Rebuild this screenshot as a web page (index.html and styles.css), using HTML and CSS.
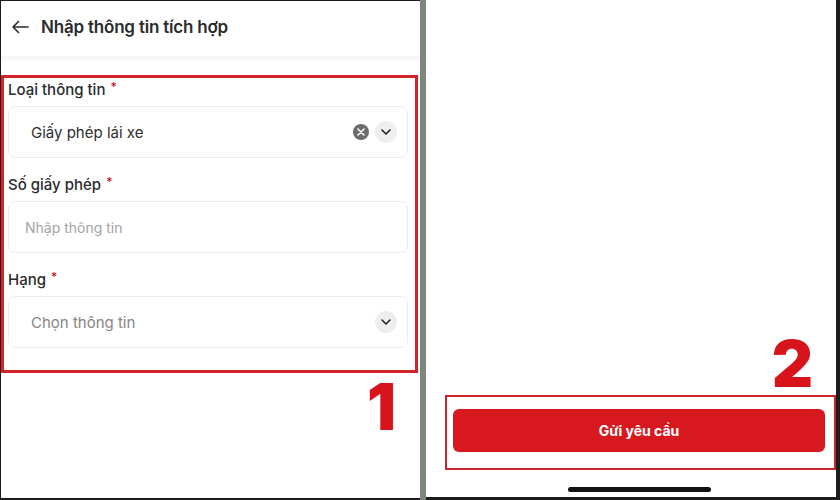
FILE: index.html
```html
<!DOCTYPE html>
<html lang="vi">
<head>
  <meta charset="UTF-8">
  <meta name="viewport" content="width=device-width, initial-scale=1.0">
  <title>Nhập thông tin tích hợp</title>
  <link rel="stylesheet" href="styles.css">
</head>
<body>
  <div class="frame">
    <!-- Step 1: form -->
    <div class="panel panel-left">
      <div class="header">
        <svg class="back" width="18" height="14" viewBox="0 0 18 14">
          <path d="M17 7H2 M7.5 1.5L2 7l5.5 5.5" fill="none" stroke="#2b2b2b" stroke-width="1.6" stroke-linecap="round" stroke-linejoin="round"/>
        </svg>
        <h1>Nhập thông tin tích hợp</h1>
      </div>

      <div class="highlight">
        <div class="field">
          <label>Loại thông tin <span class="req">*</span></label>
          <div class="input select">
            <span class="value">Giấy phép lái xe</span>
            <span class="clear">
              <svg width="8" height="8" viewBox="0 0 8 8"><path d="M1 1l6 6M7 1L1 7" stroke="#fff" stroke-width="1.6" stroke-linecap="round"/></svg>
            </span>
            <span class="chev">
              <svg width="10" height="6" viewBox="0 0 10 6"><path d="M1 1l4 4 4-4" fill="none" stroke="#222" stroke-width="1.6" stroke-linecap="round" stroke-linejoin="round"/></svg>
            </span>
          </div>
        </div>

        <div class="field">
          <label>Số giấy phép <span class="req">*</span></label>
          <div class="input text">
            <span class="placeholder">Nhập thông tin</span>
          </div>
        </div>

        <div class="field">
          <label>Hạng <span class="req">*</span></label>
          <div class="input select">
            <span class="value muted">Chọn thông tin</span>
            <span class="chev">
              <svg width="10" height="6" viewBox="0 0 10 6"><path d="M1 1l4 4 4-4" fill="none" stroke="#222" stroke-width="1.6" stroke-linecap="round" stroke-linejoin="round"/></svg>
            </span>
          </div>
        </div>
      </div>

      <div class="step-num step-one">1</div>
    </div>

    <div class="divider"></div>

    <!-- Step 2: submit -->
    <div class="panel panel-right">
      <div class="step-num step-two">2</div>
      <div class="send-box">
        <button class="send">Gửi yêu cầu</button>
      </div>
      <div class="home-bar"></div>
    </div>
  </div>
</body>
</html>
```

FILE: styles.css
```css
body {
  margin: 0;
  padding: 0;
  font-family: Inter, "Noto Sans", sans-serif;
  background-color: #fff;
  color: #2b2b2b;
}
.frame {
  display: flex;
  width: 840px;
  height: 500px;
  overflow: hidden;
}
.panel {
  display: flex;
  flex-direction: column;
  box-sizing: border-box;
  height: 500px;
  background-color: #fff;
}
.panel-left {
  width: 420px;
  border-left: 1px solid #1c1c1c;
  border-top: 1px solid #1c1c1c;
  border-bottom: 2px solid #1c1c1c;
}
.divider {
  width: 6px;
  background-color: #7c887b;
}
.panel-right {
  flex: 1;
  justify-content: flex-end;
  border-right: 4px solid #1c1c1c;
  border-bottom: 3px solid #1c1c1c;
}

/* header */
.header {
  display: flex;
  align-items: center;
  height: 55px;
  padding-left: 10px;
  box-shadow: 0 3px 4px rgba(0, 0, 0, 0.04);
  border-bottom: 1px solid #f4f4f4;
}
.back {
  margin-right: 12px;
  margin-bottom: 4px;
}
.header h1 {
  margin: 0 0 4px 0;
  font-size: 17px;
  font-weight: 600;
  letter-spacing: -0.2px;
}

/* red annotation box */
.highlight {
  margin: 18px 2px 0 0;
  padding: 0 7px 22px 4px;
  border: 3px solid #d3222a;
}
.field label {
  display: block;
  height: 24px;
  line-height: 24px;
  margin: 15px 0 4px 0;
  font-size: 15px;
  font-weight: 500;
  color: #2b2b2b;
}
.field:first-child label {
  margin-top: 0;
}
.req {
  color: #c8141c;
  font-size: 12px;
  line-height: 0;
  vertical-align: 4px;
  margin-left: 1px;
}
.input {
  display: flex;
  align-items: center;
  box-sizing: border-box;
  height: 52px;
  border: 1px solid #ededed;
  border-radius: 7px;
  background-color: #fff;
}
.input.select {
  padding: 0 10px 0 22px;
}
.input.text {
  padding: 0 16px;
}
.value {
  flex: 1;
  font-size: 15px;
  color: #2e2e2e;
}
.value.muted {
  color: #858585;
}
.placeholder {
  font-size: 14px;
  color: #a3a3a3;
}
.clear {
  display: flex;
  align-items: center;
  justify-content: center;
  width: 16px;
  height: 16px;
  border-radius: 50%;
  background-color: #6c6c6c;
  margin-right: 6px;
}
.chev {
  display: flex;
  align-items: center;
  justify-content: center;
  width: 22px;
  height: 22px;
  border-radius: 50%;
  background-color: #eeeeee;
}

/* step numbers */
.step-num {
  font-family: Inter, "Liberation Sans", sans-serif;
  font-weight: 900;
  font-size: 64px;
  line-height: 56px;
  color: #d7141b;
}
.step-one {
  align-self: flex-end;
  margin: 6px 24px 0 0;
}
.step-two {
  align-self: flex-end;
  margin: 0 23px 3px 0;
}

/* submit */
.send-box {
  margin-left: 19px;
  padding: 12px 9px 16px 6px;
  border: 2px solid #c9232b;
}
.send {
  display: block;
  width: 100%;
  height: 43px;
  border: none;
  border-radius: 6px;
  background-color: #d7191f;
  color: #fff;
  font-family: Inter, "Noto Sans", sans-serif;
  font-size: 14px;
  font-weight: 700;
}
.home-bar {
  align-self: center;
  width: 143px;
  height: 5px;
  margin: 17px 0 5px 16px;
  border-radius: 3px;
  background-color: #111;
}
```
